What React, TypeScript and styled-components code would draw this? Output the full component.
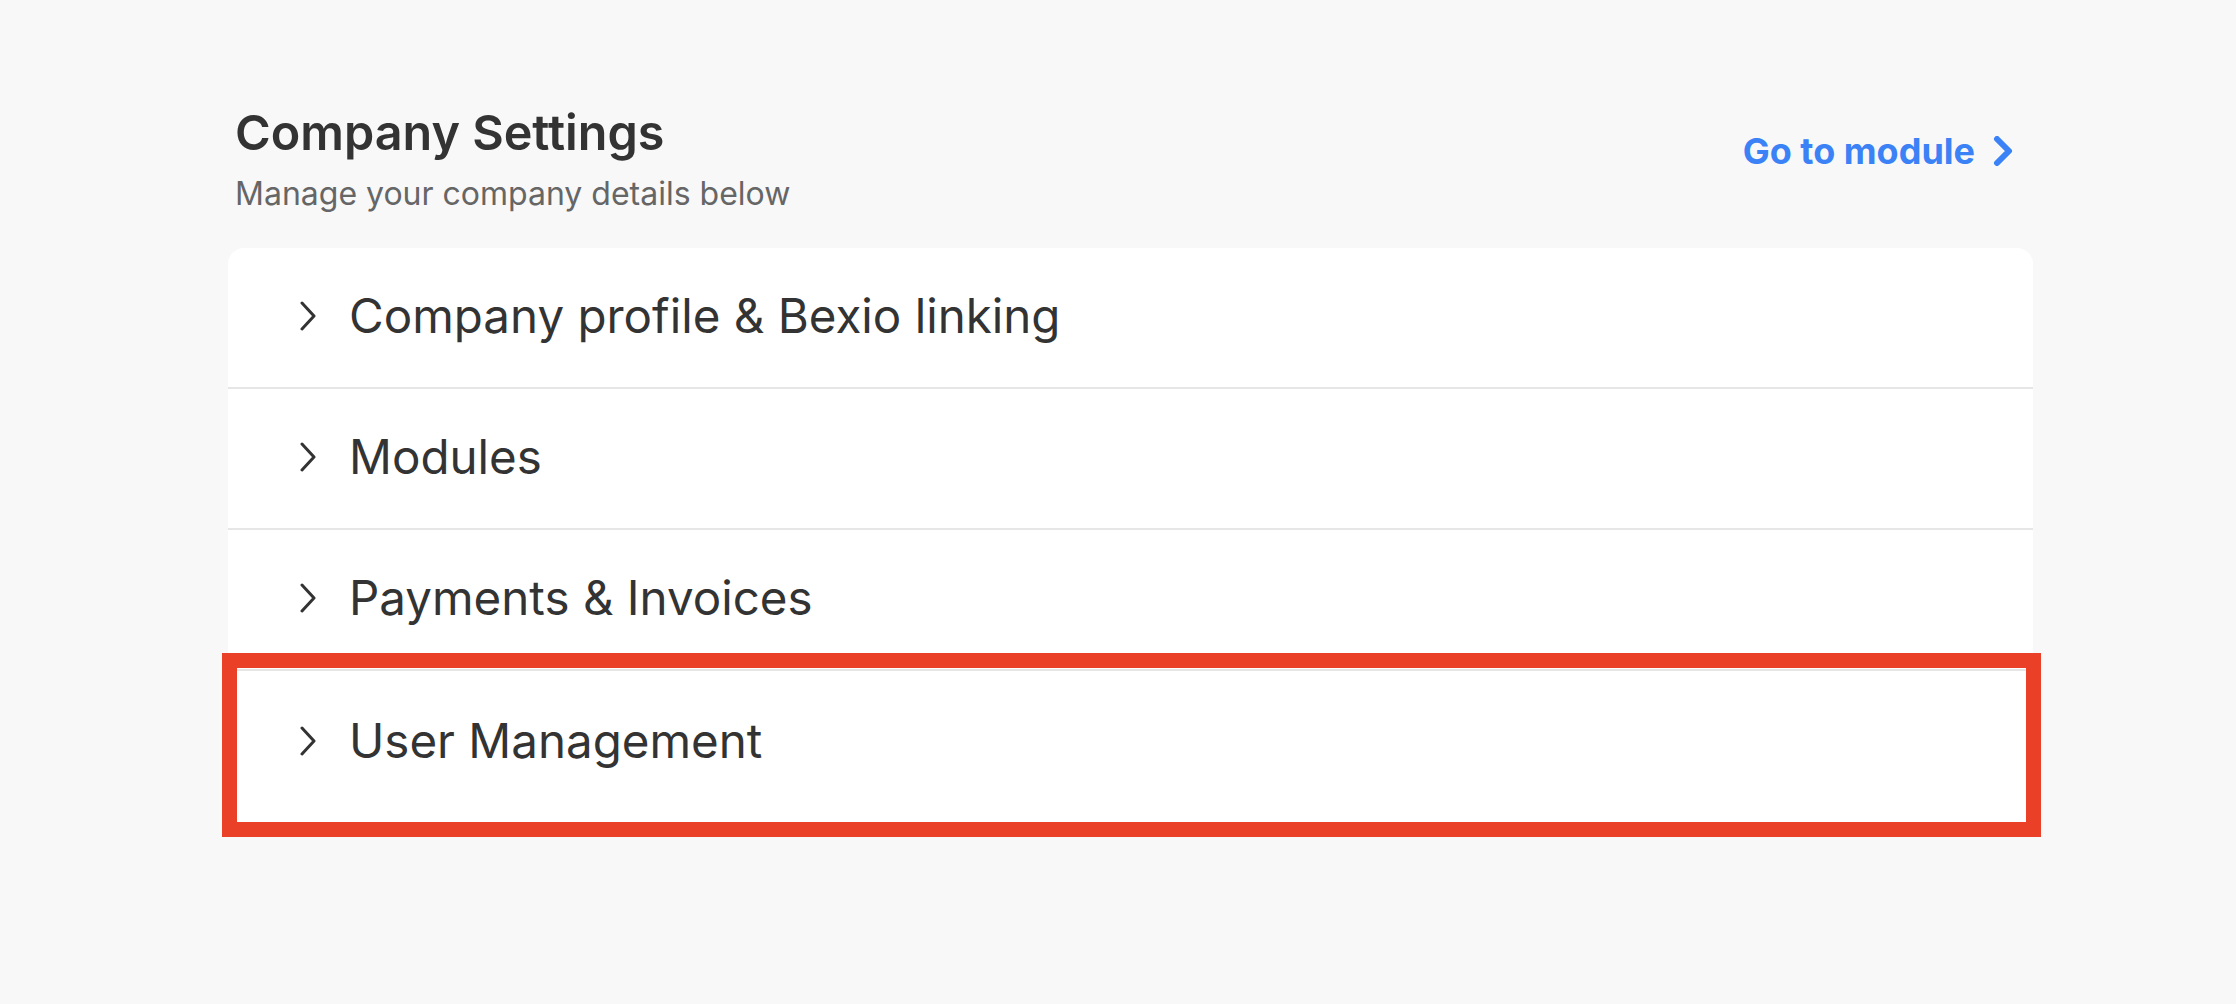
import React from "react";
import styled, { createGlobalStyle } from "styled-components";

const GlobalStyle = createGlobalStyle`
  html, body {
    margin: 0;
    padding: 0;
    background: #f8f8f8;
    font-family: Inter, "Noto Sans", "Liberation Sans", sans-serif;
  }
`;

const Page = styled.div`
  min-height: 1004px;
  padding: 102px 0 0 228px;
  box-sizing: border-box;
`;

const Container = styled.div`
  width: 1805px;
`;

const Header = styled.div`
  display: flex;
  align-items: flex-start;
  justify-content: space-between;
  padding: 0 20px 0 7px;
  margin-bottom: 24px;
`;

const Title = styled.h1`
  margin: 0;
  font-size: 48.5px;
  font-weight: 600;
  line-height: 62px;
  color: #333333;
`;

const Subtitle = styled.p`
  margin: 0;
  font-size: 32px;
  line-height: 60px;
  color: #666666;
`;

const ModuleLink = styled.a`
  display: flex;
  align-items: center;
  gap: 18px;
  margin-top: 27px;
  font-size: 36px;
  font-weight: 700;
  color: #3b82f6;
  text-decoration: none;
  cursor: pointer;
`;

const Card = styled.div`
  background: #ffffff;
  border-radius: 16px;
  padding-bottom: 14px;
`;

const Row = styled.div<{ $last?: boolean }>`
  position: relative;
  display: flex;
  align-items: center;
  gap: 33px;
  height: ${(p) => (p.$last ? "139px" : "141px")};
  box-sizing: border-box;
  padding: 0 0 ${(p) => (p.$last ? "0" : "4px")} 72px;
  border-bottom: ${(p) => (p.$last ? "none" : "2px solid #e6e6e6")};
  font-size: 47.5px;
  color: #333333;
  cursor: pointer;
`;

const Highlight = styled.div`
  position: absolute;
  top: -18px;
  bottom: -27px;
  left: -6px;
  right: -8px;
  border: 15px solid #e94027;
  pointer-events: none;
`;

const Chevron = () => (
  <svg width="16" height="30" viewBox="0 0 16 30" fill="none">
    <path d="M2 2 L14 15 L2 28" stroke="#333" strokeWidth="3" strokeLinecap="round" strokeLinejoin="round" />
  </svg>
);

const BoldChevron = () => (
  <svg width="20" height="30" viewBox="0 0 20 30" fill="none">
    <path d="M4 3 L16 15 L4 27" stroke="#3b82f6" strokeWidth="6" strokeLinecap="round" strokeLinejoin="round" />
  </svg>
);

const sections = [
  "Company profile & Bexio linking",
  "Modules",
  "Payments & Invoices",
  "User Management",
];

export default function App() {
  return (
    <>
      <GlobalStyle />
      <Page>
        <Container>
          <Header>
            <div>
              <Title>Company Settings</Title>
              <Subtitle>Manage your company details below</Subtitle>
            </div>
            <ModuleLink>
              Go to module
              <BoldChevron />
            </ModuleLink>
          </Header>
          <Card>
            {sections.map((s, i) => (
              <Row key={s} $last={i === sections.length - 1}>
                <Chevron />
                <span>{s}</span>
                {i === sections.length - 1 && <Highlight />}
              </Row>
            ))}
          </Card>
        </Container>
      </Page>
    </>
  );
}
